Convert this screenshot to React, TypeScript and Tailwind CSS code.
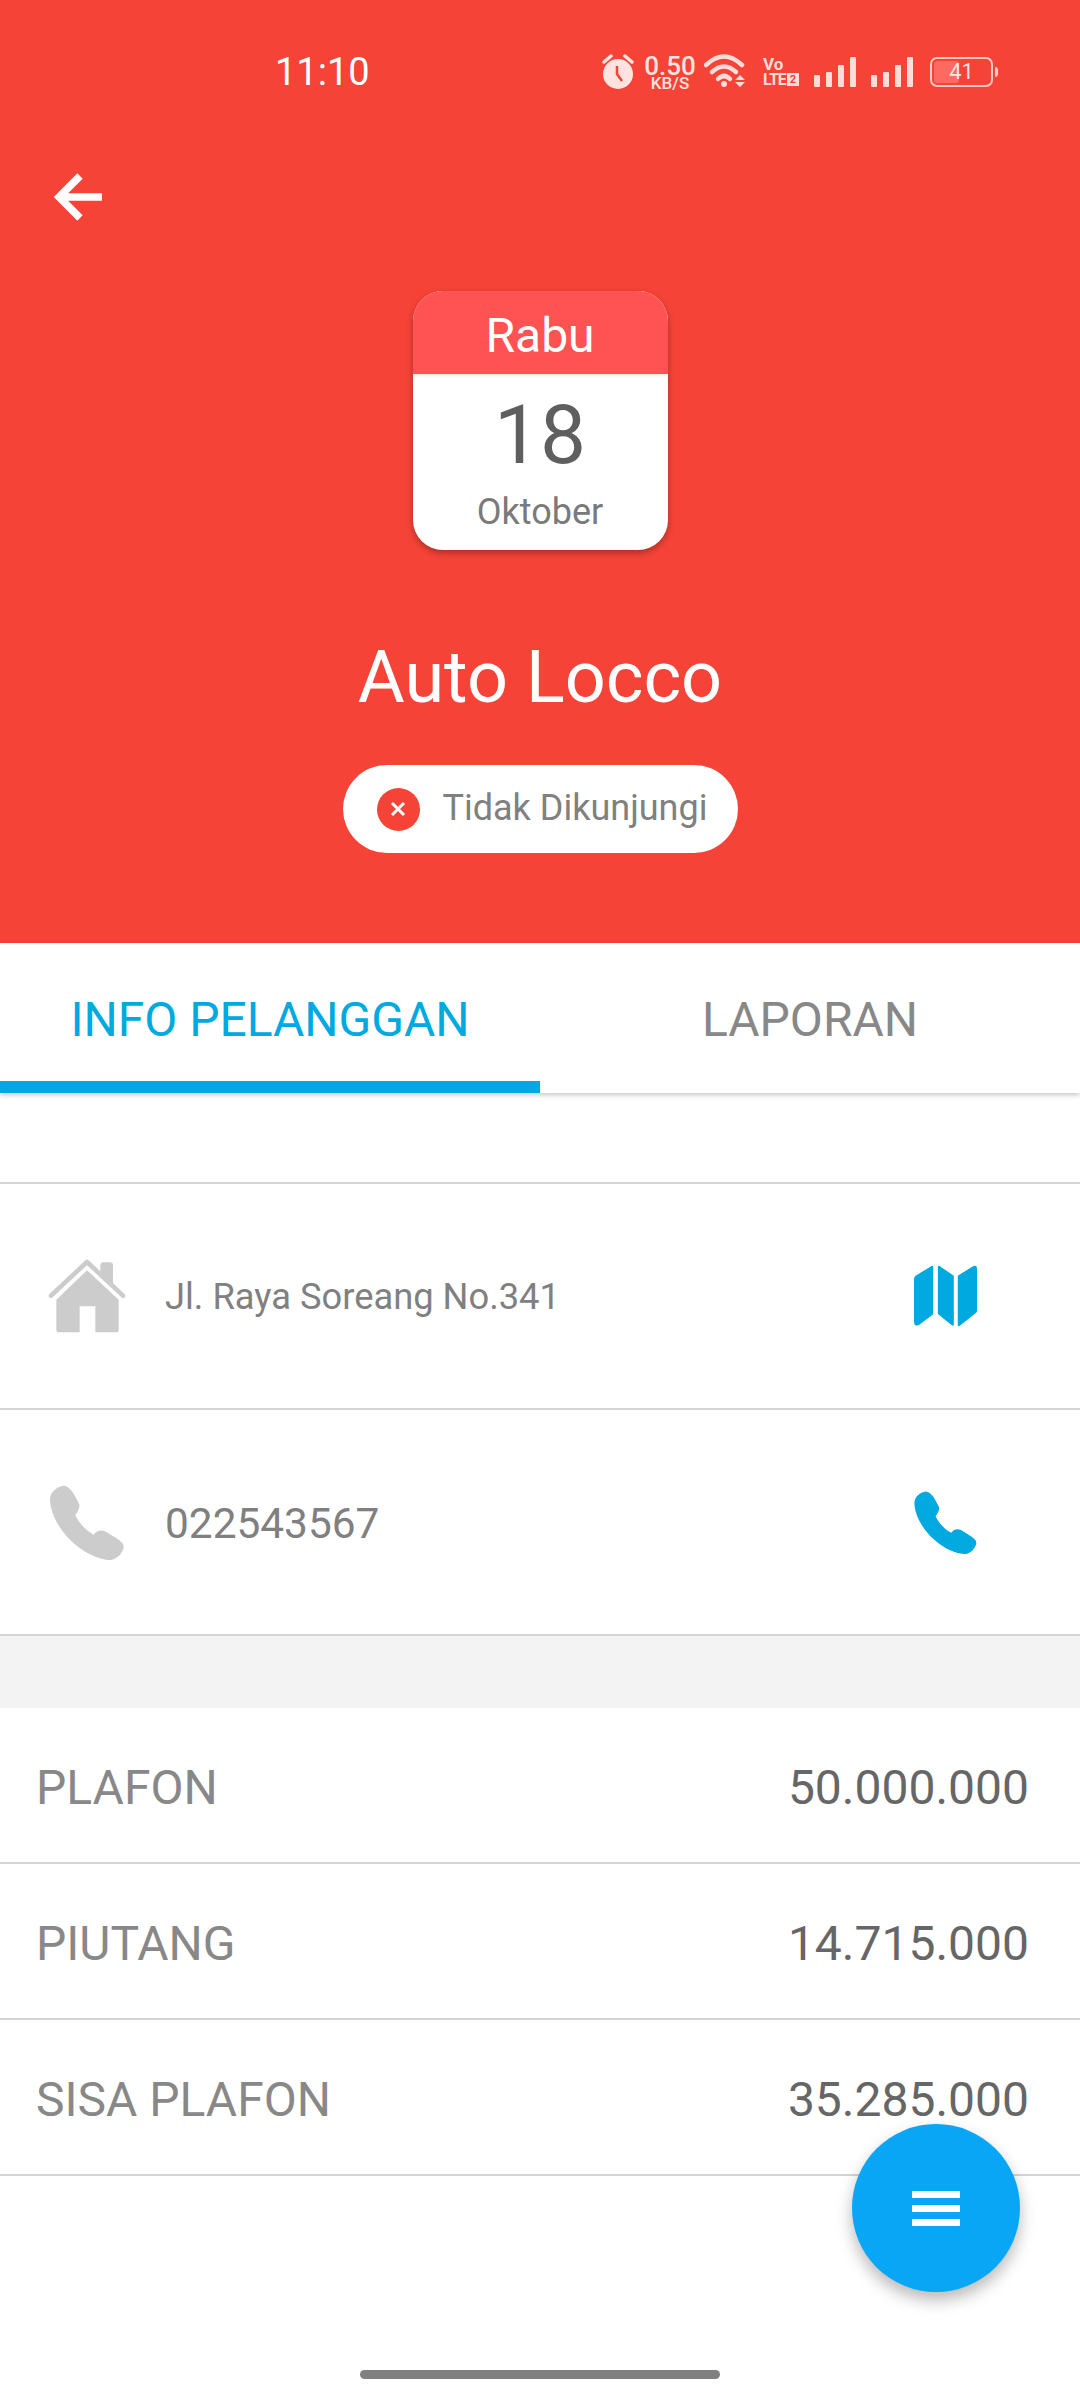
import React from 'react';

const Signal = () => (
  <svg width="42" height="30" viewBox="0 0 42 30" fill="#ffdcd8">
    <rect x="0" y="18" width="6" height="12" rx="1" />
    <rect x="12" y="15" width="6" height="15" rx="1" />
    <rect x="24" y="8" width="6" height="22" rx="1" />
    <rect x="36" y="0" width="6" height="30" rx="1" />
  </svg>
);

const StatusBar = () => (
  <div className="h-[44px] pl-[275px] pr-[82px] flex items-center justify-between text-white">
    <span className="text-[38px] leading-none">11:10</span>
    <div className="flex items-center">
      <svg width="34" height="36" viewBox="0 0 34 36" className="mr-[9px]">
        <circle cx="17" cy="20" r="15" fill="#ffe3e0" />
        <path d="M3 8 L10 2 M31 8 L24 2" stroke="#ffe3e0" strokeWidth="3.5" strokeLinecap="round" />
        <path d="M16 12 V20 L21 27" stroke="#f54337" strokeWidth="2.5" fill="none" />
      </svg>
      <div className="w-[52px] flex flex-col items-center text-[#ffe3e0]">
        <span className="text-[26px] leading-[22px] font-medium">0.50</span>
        <span className="text-[17px] leading-[13px] font-medium">KB/S</span>
      </div>
      <svg width="42" height="36" viewBox="0 0 42 36" className="ml-[8px]">
        <g fill="none" stroke="#ffdcd8" strokeWidth="4.5" strokeLinecap="round">
          <path d="M2 11 Q20 -6 38 11" />
          <path d="M8 18 Q20 7 32 18" />
          <path d="M14 25 Q20 19 26 25" />
        </g>
        <circle cx="20" cy="30" r="3" fill="#ffdcd8" />
        <path d="M31 26 L36 21 L41 26 Z M31 28 L41 28 L36 33 Z" fill="#ffdcd8" />
      </svg>
      <div className="ml-[17px] w-[36px] flex flex-col text-[#ffdcd8] font-bold">
        <span className="text-[17px] leading-[15px]">Vo</span>
        <div className="flex items-center gap-[1px]">
          <span className="text-[16px] leading-[16px] tracking-[-1px]">LTE</span>
          <span className="w-[13px] h-[13px] bg-[#ffdcd8] text-[#f54337] text-[11px] leading-[13px] text-center">2</span>
        </div>
      </div>
      <div className="ml-[15px] flex gap-[15px]">
        <Signal />
        <Signal />
      </div>
      <div className="ml-[17px] relative w-[63px] h-[30px] rounded-[7px] border-2 border-[#ffc9c3] overflow-hidden flex items-center justify-center">
        <div className="absolute left-[2px] top-[2px] bottom-[2px] w-[25px] rounded-[3px] bg-[#ff6a60]" />
        <span className="relative text-[22px] leading-none text-[#ffe3e0]">41</span>
      </div>
      <div className="w-[3px] h-[10px] ml-[2px] rounded-r-sm bg-[#ffc9c3]" />
    </div>
  </div>
);

const Calendar = () => (
  <div className="self-center mt-[70px] w-[255px] h-[259px] rounded-[30px] bg-white overflow-hidden shadow-[0_3px_6px_rgba(0,0,0,0.3)]">
    <div className="h-[83px] pt-[7px] bg-[#ff5252] flex items-center justify-center text-white text-[48px] leading-none">
      Rabu
    </div>
    <div className="flex flex-col items-center shadow-[inset_0_4px_4px_-3px_rgba(0,0,0,0.12)]">
      <span className="mt-[18px] text-[#5f5f5f] text-[82px] leading-[86px]">18</span>
      <span className="mt-[12px] text-[#7a7a7a] text-[36px] leading-[44px]">Oktober</span>
    </div>
  </div>
);

const Phone = ({ className, color }: { className: string; color: string }) => (
  <svg viewBox="0 0 220 223" className={className} fill={color}>
    <path d="M40 2 C50 2 60 10 70 25 L86 55 C90 65 85 75 75 90 C85 110 105 135 130 148 C140 135 150 133 165 138 L200 160 C215 170 222 178 218 190 C210 210 195 223 175 223 C90 215 0 120 0 40 C2 20 20 5 40 2 Z" />
  </svg>
);

const House = () => (
  <svg viewBox="0 0 240 228" className="w-[80px] h-[76px]" fill="#cccccc">
    <path d="M28 125 L120 37 L215 125 V215 Q215 223 207 223 H145 V145 H98 V223 H36 Q28 223 28 215 Z" />
    <path d="M160 22 Q160 13 170 13 H190 Q198 13 198 22 V78 L160 42 Z" />
    <path d="M12 113 L120 12 L228 113" fill="none" stroke="#cccccc" strokeWidth="14" strokeLinecap="round" strokeLinejoin="round" />
  </svg>
);

const MapIcon = () => (
  <svg viewBox="0 0 190 186" className="w-[63px] h-[62px]" fill="#00a9e0">
    <path d="M0 42 Q0 35 6 31 L52 3 Q58 0 58 6 V148 L16 180 Q0 188 0 170 Z" />
    <path d="M72 6 Q72 0 78 3 L120 32 V178 Q120 185 114 181 L72 147 Z" />
    <path d="M132 32 L178 3 Q190 -2 190 12 V138 Q190 142 186 145 L138 183 Q132 187 132 180 Z" />
  </svg>
);

const ContactRow = ({
  left,
  right,
  text,
  textClass,
}: {
  left: React.ReactNode;
  right: React.ReactNode;
  text: string;
  textClass: string;
}) => (
  <div className="h-[226px] border-b-2 border-[#d4d4d4] flex items-center">
    <div className="w-[165px] pl-[47px] shrink-0">{left}</div>
    <span className={textClass}>{text}</span>
    <div className="w-[166px] shrink-0">{right}</div>
  </div>
);

const AmountRow = ({ label, value }: { label: string; value: string }) => (
  <div className="h-[156px] border-b-2 border-[#d4d4d4] pl-[36px] pr-[51px] pt-[5px] flex items-center justify-between text-[48px]">
    <span className="text-[#888888]">{label}</span>
    <span className="text-[#666666]">{value}</span>
  </div>
);

export default function App() {
  return (
    <div className="relative w-[1080px] h-[2400px] overflow-hidden bg-white font-[Roboto,sans-serif]">
      <div className="h-[943px] pt-[50px] bg-[#f54337] flex flex-col">
        <StatusBar />
        <svg width="50" height="48" viewBox="0 0 50 48" className="ml-[54px] mt-[79px]">
          <path d="M48 24 H6 M26 3 L5 24 L26 45" fill="none" stroke="#ffffff" strokeWidth="7.5" />
        </svg>
        <Calendar />
        <div className="mt-[86px] text-center text-white text-[72px] leading-[84px]">Auto Locco</div>
        <div className="self-center mt-[45px] w-[395px] h-[88px] rounded-full bg-white pl-[34px] flex items-center">
          <div className="w-[43px] h-[43px] rounded-full bg-[#f54337] flex items-center justify-center">
            <svg width="18" height="18" viewBox="0 0 18 18">
              <path d="M3 3 L15 15 M15 3 L3 15" stroke="#ffffff" strokeWidth="3" />
            </svg>
          </div>
          <span className="ml-[23px] pb-[3px] text-[#808080] text-[36px]">Tidak Dikunjungi</span>
        </div>
      </div>

      <div className="relative flex h-[150px] bg-white text-[48px] shadow-[0_2px_5px_rgba(0,0,0,0.22)]">
        <div className="flex-1 pt-[16px] border-b-[12px] border-[#00a9e0] text-[#00a9e0] flex items-center justify-center">
          INFO PELANGGAN
        </div>
        <div className="flex-1 pt-[16px] border-b-[12px] border-transparent text-[#888888] flex items-center justify-center">
          LAPORAN
        </div>
      </div>

      <div className="h-[91px] border-b-2 border-[#d4d4d4]" />
      <ContactRow
        left={<House />}
        right={<MapIcon />}
        text="Jl. Raya Soreang No.341"
        textClass="flex-1 pt-[3px] text-[#808080] text-[36.3px]"
      />
      <ContactRow
        left={<div className="pl-[3px]"><Phone className="w-[74px] h-[75px]" color="#cccccc" /></div>}
        right={<Phone className="w-[63px] h-[63px]" color="#00a9e0" />}
        text="022543567"
        textClass="flex-1 pt-[4px] text-[#808080] text-[42.4px]"
      />
      <div className="h-[72px] bg-[#f3f3f3]" />
      <AmountRow label="PLAFON" value="50.000.000" />
      <AmountRow label="PIUTANG" value="14.715.000" />
      <AmountRow label="SISA PLAFON" value="35.285.000" />

      <div className="absolute left-[852px] top-[2124px] w-[168px] h-[168px] rounded-full bg-[#09a6f6] flex flex-col items-center justify-center gap-[7px] shadow-[0_8px_16px_rgba(0,0,0,0.28)]">
        <div className="w-[48px] h-[7px] bg-white" />
        <div className="w-[48px] h-[7px] bg-white" />
        <div className="w-[48px] h-[7px] bg-white" />
      </div>
      <div className="absolute left-[360px] top-[2370px] w-[360px] h-[9px] rounded-full bg-[#808080]" />
    </div>
  );
}
